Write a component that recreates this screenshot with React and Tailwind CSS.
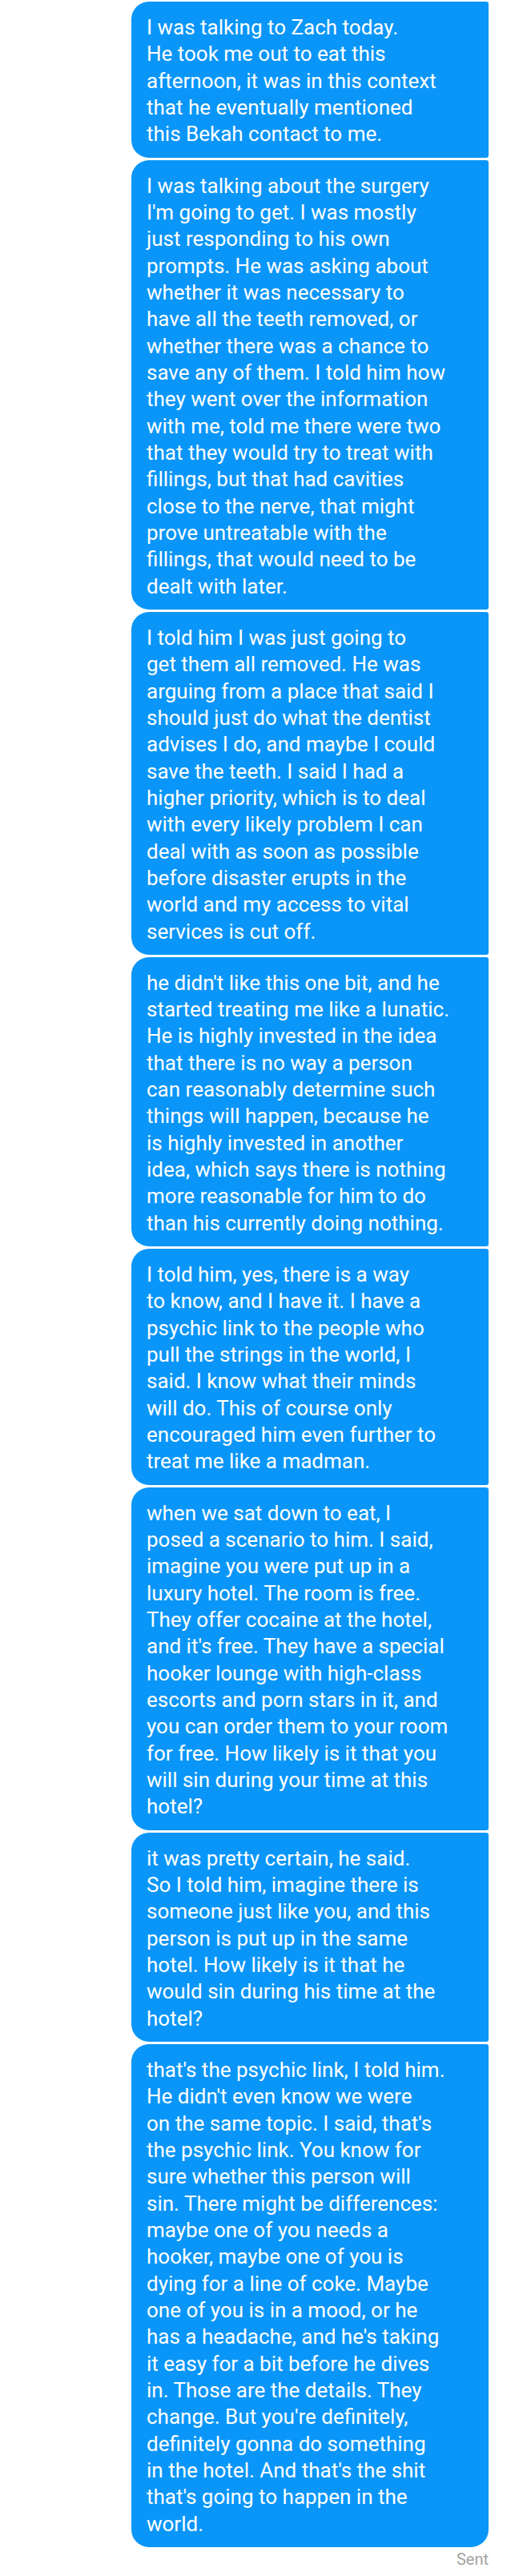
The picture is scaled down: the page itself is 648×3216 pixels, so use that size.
const messages = [
  [
    "I was talking to Zach today.",
    "He took me out to eat this",
    "afternoon, it was in this context",
    "that he eventually mentioned",
    "this Bekah contact to me.",
  ],
  [
    "I was talking about the surgery",
    "I'm going to get. I was mostly",
    "just responding to his own",
    "prompts. He was asking about",
    "whether it was necessary to",
    "have all the teeth removed, or",
    "whether there was a chance to",
    "save any of them. I told him how",
    "they went over the information",
    "with me, told me there were two",
    "that they would try to treat with",
    "fillings, but that had cavities",
    "close to the nerve, that might",
    "prove untreatable with the",
    "fillings, that would need to be",
    "dealt with later.",
  ],
  [
    "I told him I was just going to",
    "get them all removed. He was",
    "arguing from a place that said I",
    "should just do what the dentist",
    "advises I do, and maybe I could",
    "save the teeth. I said I had a",
    "higher priority, which is to deal",
    "with every likely problem I can",
    "deal with as soon as possible",
    "before disaster erupts in the",
    "world and my access to vital",
    "services is cut off.",
  ],
  [
    "he didn't like this one bit, and he",
    "started treating me like a lunatic.",
    "He is highly invested in the idea",
    "that there is no way a person",
    "can reasonably determine such",
    "things will happen, because he",
    "is highly invested in another",
    "idea, which says there is nothing",
    "more reasonable for him to do",
    "than his currently doing nothing.",
  ],
  [
    "I told him, yes, there is a way",
    "to know, and I have it. I have a",
    "psychic link to the people who",
    "pull the strings in the world, I",
    "said. I know what their minds",
    "will do. This of course only",
    "encouraged him even further to",
    "treat me like a madman.",
  ],
  [
    "when we sat down to eat, I",
    "posed a scenario to him. I said,",
    "imagine you were put up in a",
    "luxury hotel. The room is free.",
    "They offer cocaine at the hotel,",
    "and it's free. They have a special",
    "hooker lounge with high-class",
    "escorts and porn stars in it, and",
    "you can order them to your room",
    "for free. How likely is it that you",
    "will sin during your time at this",
    "hotel?",
  ],
  [
    "it was pretty certain, he said.",
    "So I told him, imagine there is",
    "someone just like you, and this",
    "person is put up in the same",
    "hotel. How likely is it that he",
    "would sin during his time at the",
    "hotel?",
  ],
  [
    "that's the psychic link, I told him.",
    "He didn't even know we were",
    "on the same topic. I said, that's",
    "the psychic link. You know for",
    "sure whether this person will",
    "sin. There might be differences:",
    "maybe one of you needs a",
    "hooker, maybe one of you is",
    "dying for a line of coke. Maybe",
    "one of you is in a mood, or he",
    "has a headache, and he's taking",
    "it easy for a bit before he dives",
    "in. Those are the details. They",
    "change. But you're definitely,",
    "definitely gonna do something",
    "in the hotel. And that's the shit",
    "that's going to happen in the",
    "world.",
  ],
];

function Bubble({ lines, last }) {
  const radius = last
    ? "rounded-tl-[22px] rounded-bl-[22px] rounded-tr-[3px] rounded-br-[22px]"
    : "rounded-tl-[22px] rounded-bl-[22px] rounded-tr-[3px] rounded-br-[3px]";
  return (
    <div className={`bg-[#0a96f8] text-white pl-[19px] pr-3 pt-[16px] pb-[12px] ${radius}`}>
      {lines.map((l, i) => (
        <div key={i} className="whitespace-nowrap text-[26px] leading-[33.33px]">
          {l}
        </div>
      ))}
    </div>
  );
}

export default function App() {
  return (
    <div
      className="w-[648px] min-h-[3216px] bg-white pt-[2px]"
      style={{ fontFamily: "Roboto, 'Liberation Sans', sans-serif" }}
    >
      <div className="ml-[164px] w-[446px] flex flex-col gap-[3px]">
        {messages.map((m, i) => (
          <Bubble key={i} lines={m} last={i === messages.length - 1} />
        ))}
      </div>
      <div className="ml-[164px] w-[446px] flex justify-end mt-[3px]">
        <span className="text-[20px] leading-[24px] text-[#a3a3a3]">Sent</span>
      </div>
    </div>
  );
}
